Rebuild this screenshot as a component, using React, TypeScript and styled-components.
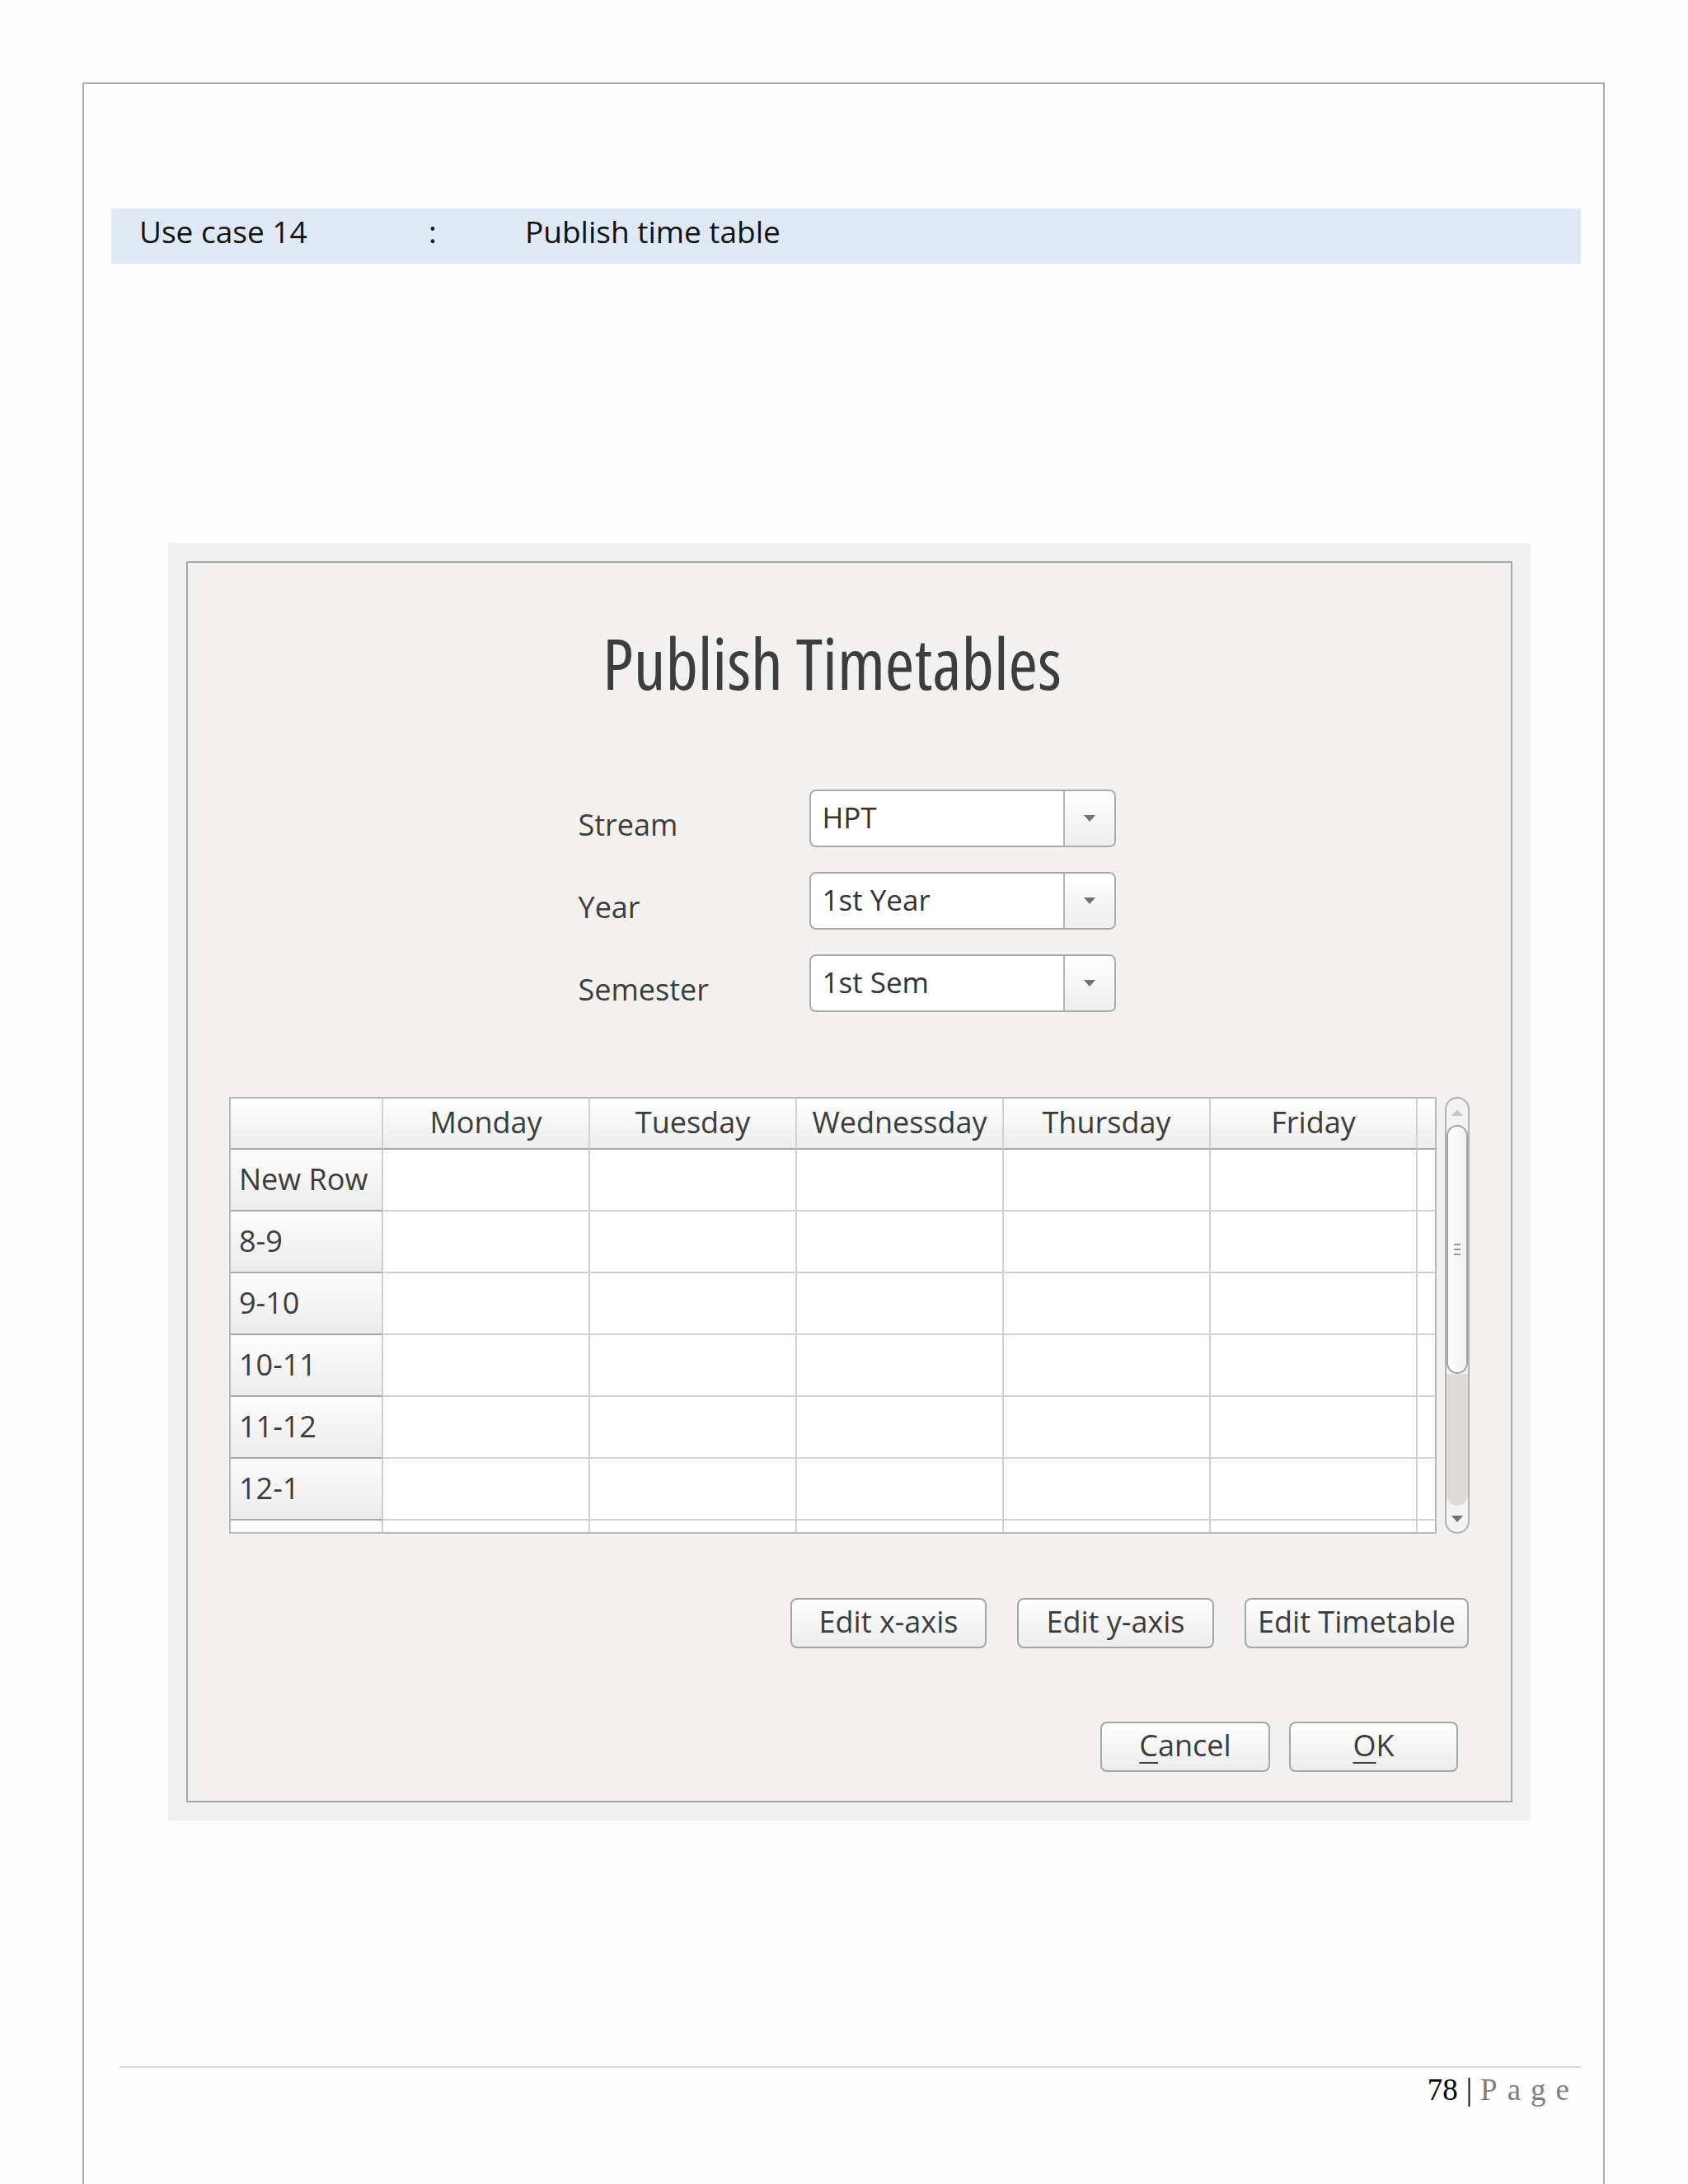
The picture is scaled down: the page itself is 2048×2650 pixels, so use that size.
import styled, { createGlobalStyle } from 'styled-components'

const GlobalStyle = createGlobalStyle`
  html, body {
    margin: 0;
    padding: 0;
    background: #fefefe;
  }
  body {
    font-family: "Open Sans", "Noto Sans", sans-serif;
  }
`

const Page = styled.div`
  margin: 100px 0 0 100px;
  width: 1843px;
  height: 2550px;
  border: 2px solid #aaaaaa;
  border-bottom: none;
  display: flex;
  flex-direction: column;
`

const CaseBand = styled.div`
  margin: 151px 27px 0 33px;
  padding-left: 34px;
  height: 67px;
  background: #dfe9f5;
  display: flex;
  align-items: center;
  font-family: "Open Sans", sans-serif;
  font-size: 37px;
  color: #111;
`

const CaseCell = styled.div<{ $w: number }>`
  width: ${p => p.$w}px;
  padding-bottom: 12px;
`

const DialogShell = styled.div`
  margin: 339px 88px 0 102px;
  background: #f0f0f0;
  padding: 22px;
`

const DialogFrame = styled.div`
  border: 2px solid #a8a8a8;
  background: #f2f1f0;
  display: flex;
  flex-direction: column;
  padding: 0 48px 35px 50px;
  color: #3c3c3c;
  font-family: "Open Sans", sans-serif;
`

const Title = styled.h1`
  margin: 78px 0 0;
  padding-right: 44px;
  height: 197px;
  text-align: center;
  font-size: 86px;
  font-weight: 400;
  font-stretch: 75%;
  line-height: 1;
  color: #3d3d3d;
`

const FormGrid = styled.div`
  display: grid;
  grid-template-columns: 280px 372px;
  row-gap: 30px;
  justify-content: center;
  margin-left: -8px;
`

const Label = styled.div`
  font-size: 36px;
  display: flex;
  align-items: flex-end;
  padding-bottom: 3px;
`

const Combo = styled.div`
  height: 66px;
  border: 2px solid #a9a9a9;
  border-radius: 8px;
  background: #fff;
  display: flex;
  overflow: hidden;
`

const ComboText = styled.div`
  flex: 1;
  padding: 0 0 4px 14px;
  display: flex;
  align-items: center;
  font-size: 35px;
  color: #333;
`

const ComboButton = styled.div`
  width: 60px;
  border-left: 2px solid #b4b4b4;
  background: linear-gradient(#ffffff, #eeeeee);
  display: flex;
  align-items: center;
  justify-content: center;
`

const TableArea = styled.div`
  margin-top: 103px;
  display: flex;
  gap: 10px;
`

const Table = styled.div`
  width: 1461px;
  height: 526px;
  border: 2px solid #b9b9b9;
  background: #fff;
  overflow: hidden;
  display: grid;
  grid-template-columns: 185px repeat(5, 251px) 1fr;
  grid-auto-rows: 75px;
  grid-template-rows: 62px;
`

const HeadCell = styled.div<{ $last?: boolean }>`
  background: linear-gradient(#ffffff, #ededed);
  border-right: ${p => (p.$last ? 'none' : '2px solid #d2d2d2')};
  border-bottom: 2px solid #a8a8a8;
  display: flex;
  align-items: center;
  justify-content: center;
  font-size: 36px;
  padding-bottom: 4px;
`

const RowHead = styled.div`
  background: linear-gradient(#fdfdfd, #ececec);
  border-right: 2px solid #cfcfcf;
  border-bottom: 2px solid #a8a8a8;
  display: flex;
  align-items: center;
  padding: 0 0 2px 10px;
  font-size: 36px;
`

const Cell = styled.div<{ $last?: boolean }>`
  border-right: ${p => (p.$last ? 'none' : '2px solid #d2d2d2')};
  border-bottom: 2px solid #d2d2d2;
`

const ScrollTrack = styled.div`
  width: 26px;
  height: 526px;
  border: 2px solid #b2b2b2;
  border-radius: 15px;
  background: #f4f3f2;
  overflow: hidden;
  display: flex;
  flex-direction: column;
  align-items: center;
`

const ScrollArrow = styled.div`
  height: 32px;
  display: flex;
  align-items: center;
  justify-content: center;
`

const ScrollThumb = styled.div`
  width: 26px;
  height: 302px;
  border: 2px solid #a4a4a4;
  border-radius: 14px;
  background: linear-gradient(90deg, #ffffff, #f1f1f1);
  display: flex;
  flex-direction: column;
  align-items: center;
  justify-content: center;
  gap: 4px;
  box-sizing: border-box;
`

const Grip = styled.span`
  width: 8px;
  height: 2px;
  background: #9a9a9a;
`

const Trough = styled.div`
  flex: 1;
  width: 26px;
  background: #dedbd9;
  border-radius: 0 0 14px 14px;
`

const ButtonRow = styled.div<{ $top: number; $right: number; $gap: number }>`
  display: flex;
  justify-content: flex-end;
  gap: ${p => p.$gap}px;
  margin-top: ${p => p.$top}px;
  margin-right: ${p => p.$right}px;
`

const Button = styled.button<{ $w: number }>`
  width: ${p => p.$w}px;
  height: 61px;
  border: 2px solid #a6a6a6;
  border-radius: 8px;
  background: linear-gradient(#ffffff, #ececec);
  font-family: "Open Sans", sans-serif;
  font-size: 36px;
  color: #3c3c3c;
  padding: 0 0 4px;
  u {
    text-decoration-thickness: 2px;
    text-underline-offset: 7px;
  }
`

const Footer = styled.div`
  margin: 298px 27px 0 43px;
  border-top: 2px solid #d9d9d9;
  display: flex;
  justify-content: flex-end;
  align-items: baseline;
  gap: 10px;
  padding: 5px 2px 0 0;
  font-family: "Liberation Serif", serif;
  font-size: 37px;
  color: #000;
`

const PageWord = styled.span`
  color: #7f7f7f;
  letter-spacing: 12px;
`

const Arrow = ({ up }: { up?: boolean }) => (
  <svg width="18" height="10" viewBox="0 0 18 10">
    <path d={up ? 'M2 10 L9 2 L16 10 Z' : 'M2 1 L16 1 L9 9 Z'} fill={up ? '#c8c8c8' : '#707070'} />
  </svg>
)

const days = ['Monday', 'Tuesday', 'Wednessday', 'Thursday', 'Friday']
const slots = ['New Row', '8-9', '9-10', '10-11', '11-12', '12-1', '']

const fields = [
  { label: 'Stream', value: 'HPT' },
  { label: 'Year', value: '1st Year' },
  { label: 'Semester', value: '1st Sem' },
]

export default function App() {
  return (
    <>
      <GlobalStyle />
      <Page>
        <CaseBand>
          <CaseCell $w={351}>Use case 14</CaseCell>
          <CaseCell $w={117}>:</CaseCell>
          <CaseCell $w={400}>Publish time table</CaseCell>
        </CaseBand>

        <DialogShell>
          <DialogFrame>
            <Title>Publish Timetables</Title>

            <FormGrid>
              {fields.map(f => (
                <>
                  <Label key={f.label + 'l'}>{f.label}</Label>
                  <Combo key={f.label + 'c'}>
                    <ComboText>{f.value}</ComboText>
                    <ComboButton>
                      <Arrow />
                    </ComboButton>
                  </Combo>
                </>
              ))}
            </FormGrid>

            <TableArea>
              <Table>
                <HeadCell />
                {days.map(d => (
                  <HeadCell key={d}>{d}</HeadCell>
                ))}
                <HeadCell $last />
                {slots.map((s, i) => (
                  <>
                    <RowHead key={'r' + i}>{s}</RowHead>
                    {days.map(d => (
                      <Cell key={d + i} />
                    ))}
                    <Cell $last key={'e' + i} />
                  </>
                ))}
              </Table>
              <ScrollTrack>
                <ScrollArrow>
                  <Arrow up />
                </ScrollArrow>
                <ScrollThumb>
                  <Grip />
                  <Grip />
                  <Grip />
                </ScrollThumb>
                <Trough />
                <ScrollArrow>
                  <Arrow />
                </ScrollArrow>
              </ScrollTrack>
            </TableArea>

            <ButtonRow $top={78} $right={3} $gap={37}>
              <Button $w={238}>Edit x-axis</Button>
              <Button $w={239}>Edit y-axis</Button>
              <Button $w={272}>Edit Timetable</Button>
            </ButtonRow>

            <ButtonRow $top={89} $right={16} $gap={23}>
              <Button $w={206}>
                <u>C</u>ancel
              </Button>
              <Button $w={205}>
                <u>O</u>K
              </Button>
            </ButtonRow>
          </DialogFrame>
        </DialogShell>

        <Footer>
          <span>78</span>
          <span>|</span>
          <PageWord>Page</PageWord>
        </Footer>
      </Page>
    </>
  )
}
